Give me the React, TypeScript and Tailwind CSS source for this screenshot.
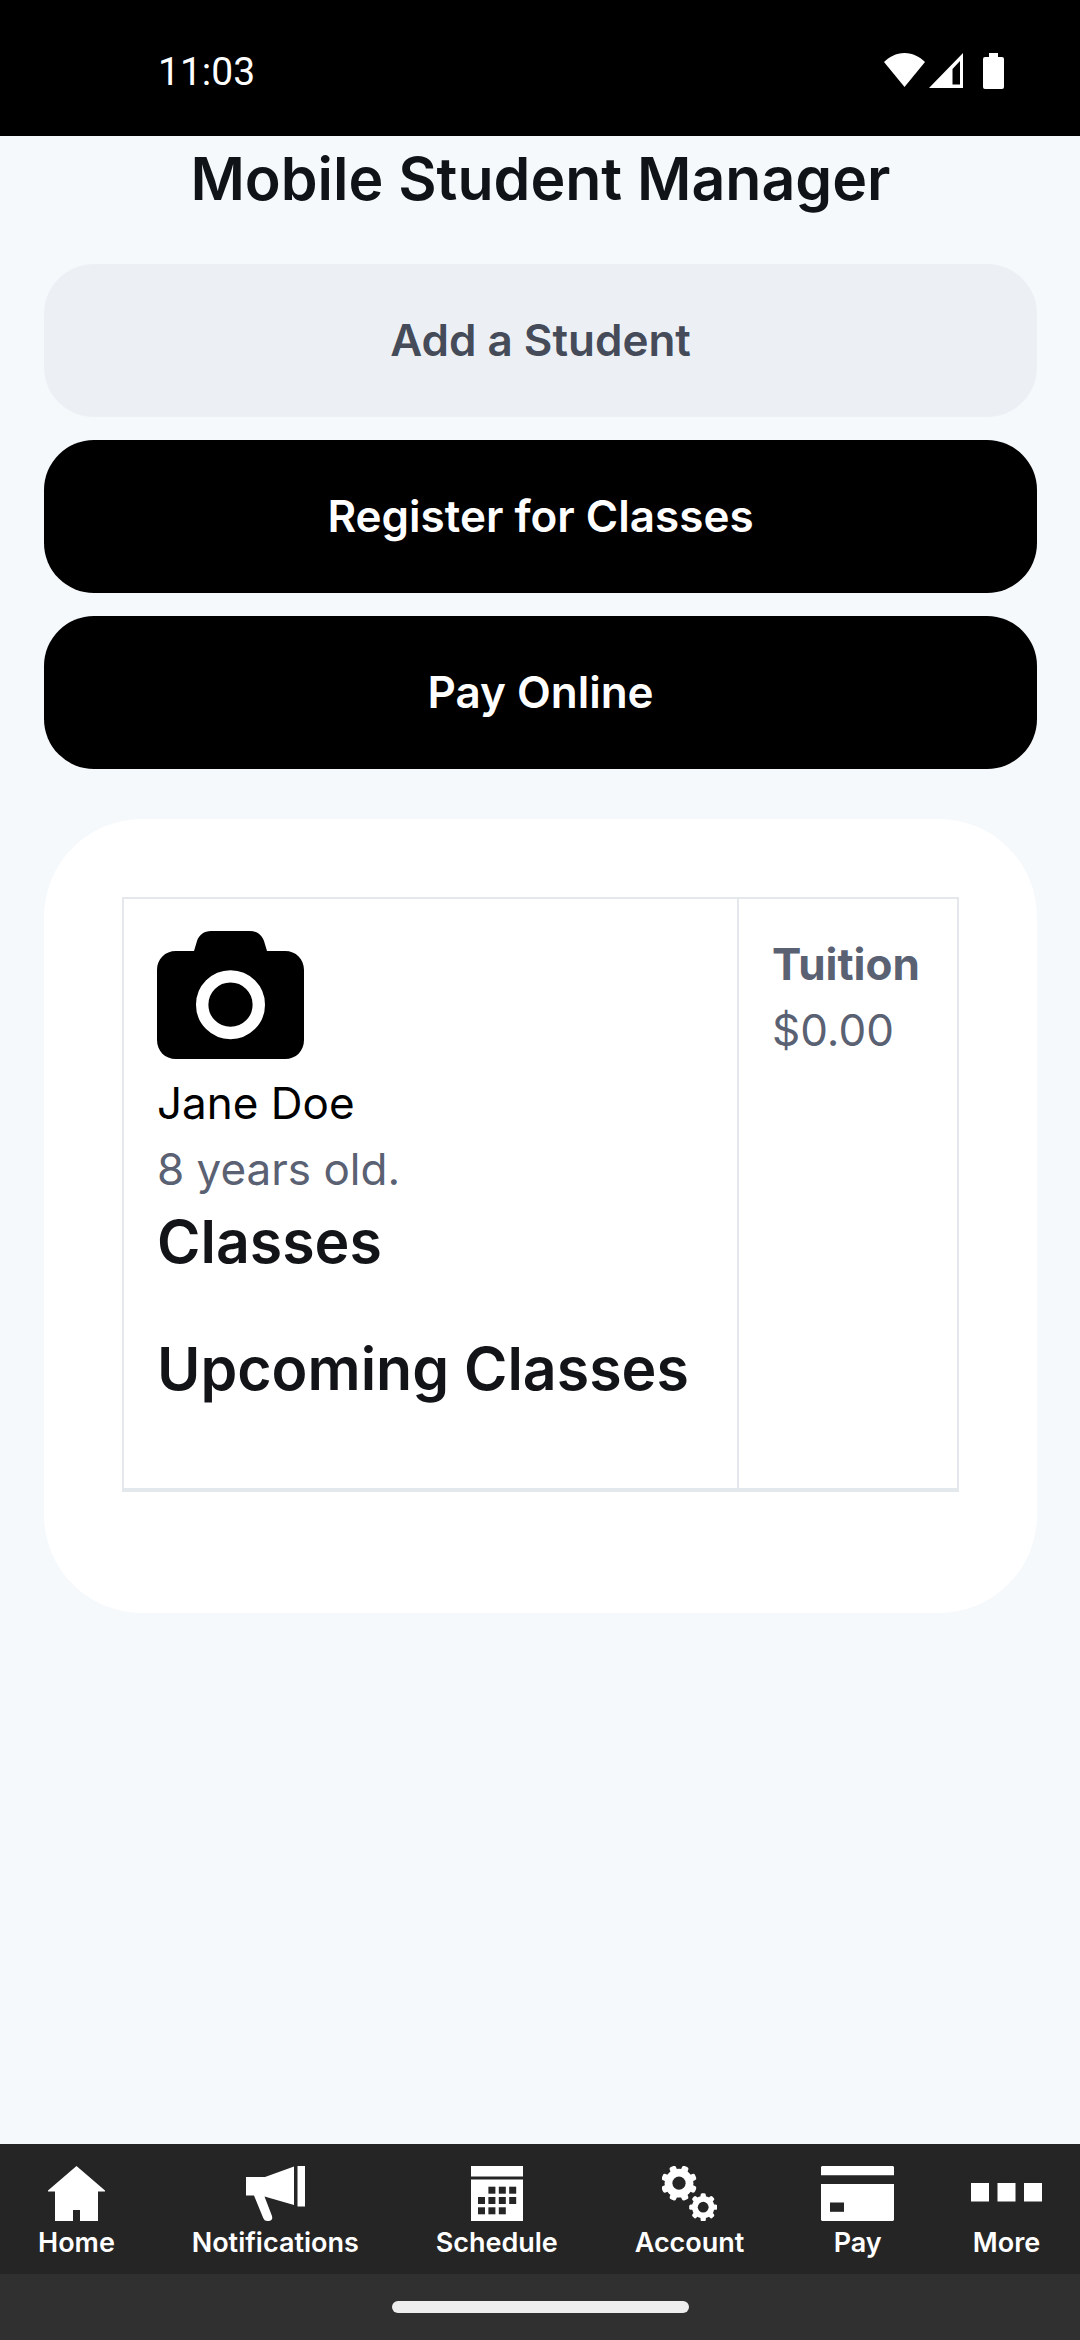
import React from 'react';

interface NavItem {
  label: string;
  icon: React.ReactNode;
}

interface Student {
  name: string;
  age: number;
  tuition: string;
}

interface GearProps {
  cx: number;
  cy: number;
  r: number;
  hole: number;
  offset?: number;
}

const students: Student[] = [{ name: 'Jane Doe', age: 8, tuition: '$0.00' }];

const teeth = [0, 45, 90, 135, 180, 225, 270, 315];

const Gear: React.FC<GearProps> = ({ cx, cy, r, hole, offset = 0 }) => (
  <g>
    {teeth.map((angle) => (
      <rect
        key={angle}
        x={cx - r * 0.19}
        y={cy - r}
        width={r * 0.38}
        height={r}
        rx={r * 0.12}
        transform={`rotate(${angle + offset} ${cx} ${cy})`}
      />
    ))}
    <circle cx={cx} cy={cy} r={r * 0.8} />
    <circle cx={cx} cy={cy} r={hole} fill="#252525" />
  </g>
);

const HomeIcon = () => (
  <svg width="57" height="55" viewBox="0 0 57 55" fill="currentColor" aria-hidden="true">
    <path d="M28.5 0L57 24.5V25.5H50V55H32V44H25V55H7V25.5H0V24.5Z" />
  </svg>
);

const MegaphoneIcon = () => (
  <svg width="59" height="55" viewBox="0 0 59 55" fill="currentColor" aria-hidden="true">
    <path d="M0 11H19L48 .5V39L18.5 30.5L25.8 49.5C27.5 54 24 55 21.5 55C19 55 18 54 17 51.5L8 29.5H0Z" />
    <rect x="51.5" width="7.5" height="40.5" />
  </svg>
);

// [column, row] of the day squares
const days = [
  [1, 0], [2, 0], [3, 0],
  [0, 1], [1, 1], [2, 1], [3, 1],
  [0, 2], [1, 2], [2, 2],
];

const CalendarIcon = () => (
  <svg width="52" height="55" viewBox="0 0 52 55" fill="currentColor" aria-hidden="true">
    <rect width="52" height="10.5" />
    <rect y="13.5" width="52" height="41.5" />
    {days.map(([col, row]) => (
      <rect
        key={`${col}-${row}`}
        x={7 + col * 10.4}
        y={20.7 + row * 10.3}
        width="7"
        height="7"
        fill="#252525"
      />
    ))}
  </svg>
);

const GearsIcon = () => (
  <svg width="55" height="55" viewBox="0 0 55 55" fill="currentColor" aria-hidden="true">
    <Gear cx={17} cy={17.2} r={18} hole={6.6} offset={22.5} />
    <Gear cx={41.2} cy={41.2} r={14} hole={5.4} />
  </svg>
);

const CardIcon = () => (
  <svg width="73" height="55" viewBox="0 0 73 55" fill="currentColor" aria-hidden="true">
    <path d="M1 0H72L73 1V9.3H0V1Z" />
    <path d="M0 18H73V54L72 55H1L0 54Z" />
    <rect x="9" y="36.5" width="14" height="9.3" fill="#252525" />
  </svg>
);

const MoreIcon = () => (
  <svg width="71" height="55" viewBox="0 0 71 55" fill="currentColor" aria-hidden="true">
    <rect y="17" width="18" height="18.5" />
    <rect x="26.5" y="17" width="18" height="18.5" />
    <rect x="53" y="17" width="18" height="18.5" />
  </svg>
);

const CameraIcon = () => (
  <svg width="147" height="128" viewBox="0 0 147 128" fill="currentColor" className="mb-[11px]" aria-hidden="true">
    <path d="M19 20H37L40 10C42 4 47 0 54 0H93C100 0 105 4 107 10L110 20H128C139 20 147 28 147 39V109C147 120 139 128 128 128H19C8 128 0 120 0 109V39C0 28 8 20 19 20Z" />
    <circle cx="73.5" cy="73.7" r="28.3" fill="none" stroke="#ffffff" strokeWidth="12.4" />
  </svg>
);

const navItems: NavItem[] = [
  { label: 'Home', icon: <HomeIcon /> },
  { label: 'Notifications', icon: <MegaphoneIcon /> },
  { label: 'Schedule', icon: <CalendarIcon /> },
  { label: 'Account', icon: <GearsIcon /> },
  { label: 'Pay', icon: <CardIcon /> },
  { label: 'More', icon: <MoreIcon /> },
];

const StatusBar = () => (
  <header className="flex h-[136px] items-start justify-between bg-black pt-[53px] pr-[76px] pl-[158px] text-white">
    <span className="font-[Roboto,sans-serif] text-[39px] leading-[38px]">11:03</span>
    <div className="flex items-start">
      <svg width="41" height="34" viewBox="0 0 41 34" fill="currentColor" className="mr-1" aria-hidden="true">
        <path d="M0 9C5 4 12 0 20.5 0C29 0 36 4 41 9L20.5 34Z" />
      </svg>
      <svg width="34" height="35" viewBox="0 0 34 35" fill="currentColor" className="mr-5" aria-hidden="true">
        <path fillRule="evenodd" d="M34 0V35H0ZM31 8L23.5 16V31.5H31Z" />
      </svg>
      <svg width="21" height="36" viewBox="0 0 21 36" fill="currentColor" aria-hidden="true">
        <path d="M6 0H15V4H19Q21 4 21 6V34Q21 36 19 36H2Q0 36 0 34V6Q0 4 2 4H6Z" />
      </svg>
    </div>
  </header>
);

const App: React.FC = () => {
  return (
    <div className="flex min-h-screen flex-col bg-[#f5f9fc] font-[Inter,sans-serif] text-[44px] leading-[66px]">
      <StatusBar />

      <main className="flex-1 pt-[3px] pr-[43px] pl-11">
        <h1 className="mb-[45px] text-center text-[59px] leading-[80px] font-semibold text-[#101418]">
          Mobile Student Manager
        </h1>

        {/* Actions */}
        <div className="flex flex-col gap-[23px]">
          <button type="button" className="h-[153px] rounded-[50px] bg-[#ecf0f5] pb-0.5 font-semibold text-[#454b58]">
            Add a Student
          </button>
          <button type="button" className="h-[153px] rounded-[50px] bg-black pb-0.5 font-semibold text-white">
            Register for Classes
          </button>
          <button type="button" className="h-[153px] rounded-[50px] bg-black pb-0.5 font-semibold text-white">
            Pay Online
          </button>
        </div>

        {/* Students */}
        <section className="mt-[50px] rounded-[98px] bg-white p-[78px]">
          <table className="mb-[43px] w-full border-collapse border-2 border-b-4 border-[#e4e7eb] border-b-[#e2e8ec] text-left">
            <tbody>
              {students.map((student) => (
                <tr key={student.name} className="align-top">
                  <td className="border-r-2 border-[#e4e7eb] px-[33px] py-8">
                    <CameraIcon />
                    <p className="text-black">{student.name}</p>
                    <p className="text-[#5a6173]">{student.age} years old.</p>
                    <h2 className="mb-[47px] text-[59px] leading-[80px] font-semibold text-[#121418]">Classes</h2>
                    <h2 className="mb-[47px] text-[59px] leading-[80px] font-semibold whitespace-nowrap text-[#121418]">
                      Upcoming Classes
                    </h2>
                  </td>
                  <td className="w-[220px] px-[33px] py-8 text-[#5a6173]">
                    <p className="font-bold">Tuition</p>
                    <p>{student.tuition}</p>
                  </td>
                </tr>
              ))}
            </tbody>
          </table>
        </section>
      </main>

      {/* Bottom navigation */}
      <nav className="flex h-[130px] items-start justify-between bg-[#252525] px-[38px] pt-[22px] text-white">
        {navItems.map((item) => (
          <a key={item.label} href="#" className="flex flex-col items-center gap-1">
            {item.icon}
            <span className="text-[27px] leading-[36px] font-semibold">{item.label}</span>
          </a>
        ))}
      </nav>
      <div className="flex h-[66px] items-center justify-center bg-[#303030]">
        <div className="h-3 w-[297px] rounded-full bg-[#eeeeee]" />
      </div>
    </div>
  );
};

export default App;
